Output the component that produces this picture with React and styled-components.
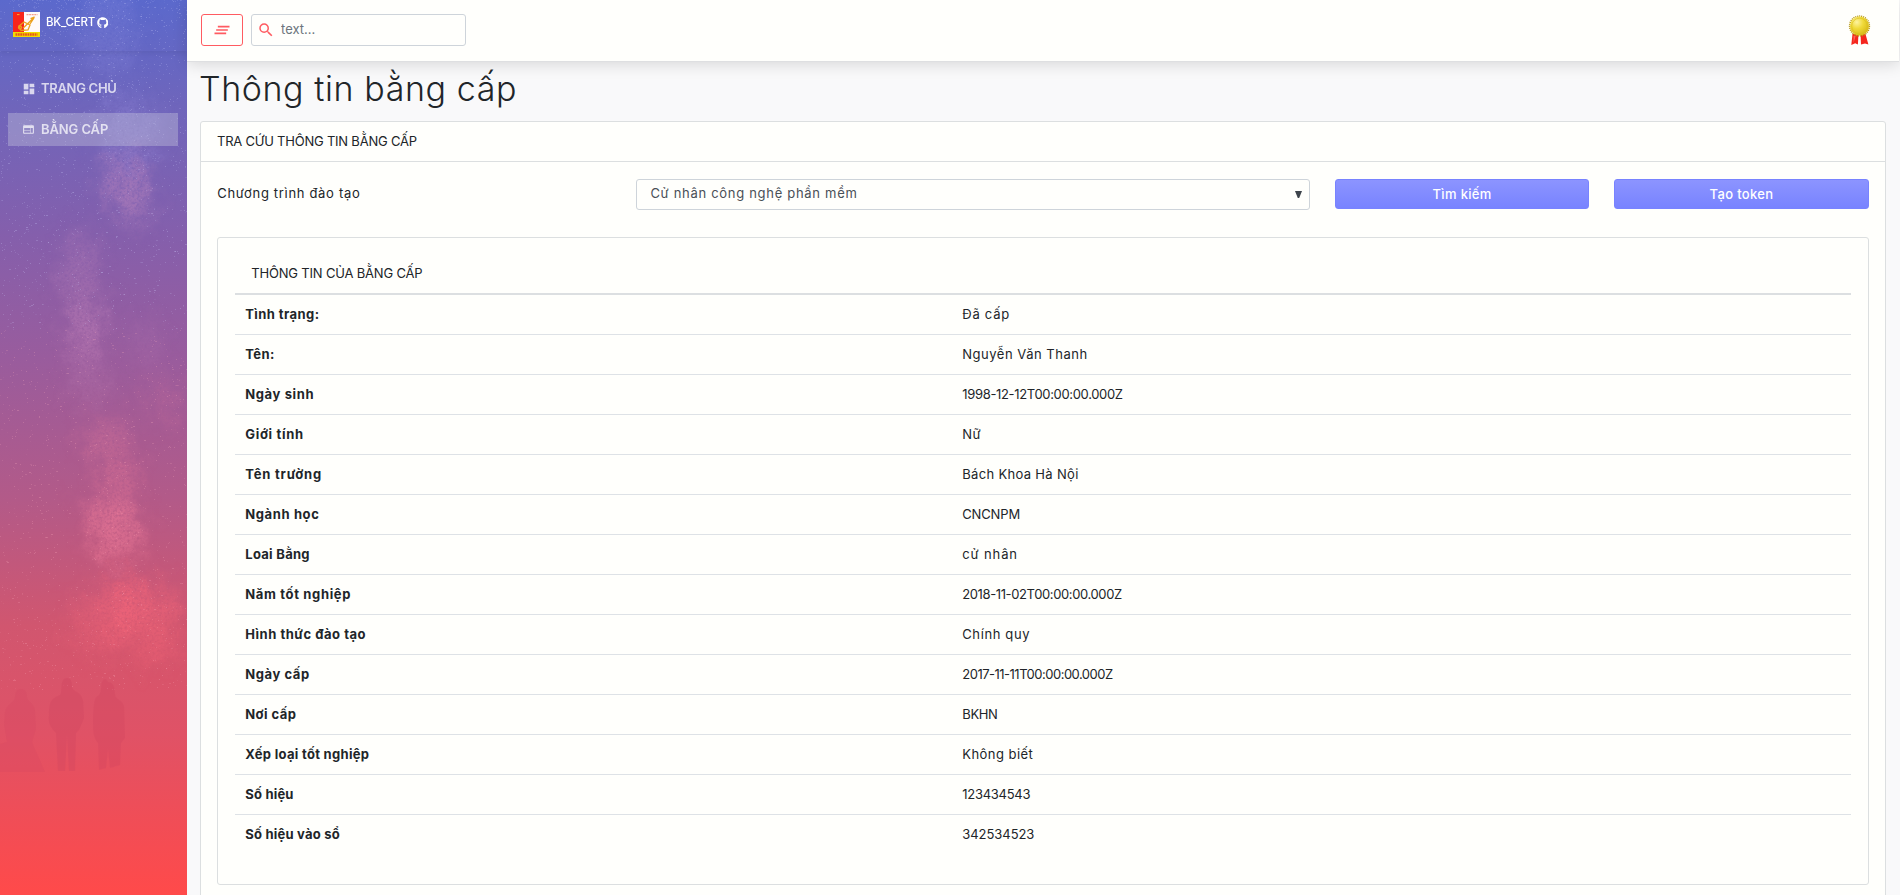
import React from "react";
import styled, { createGlobalStyle, css } from "styled-components";
import { MdClearAll, MdDashboard, MdSearch, MdWeb } from "react-icons/md";
import { FaGithub } from "react-icons/fa";

const GlobalStyle = createGlobalStyle`
  *, *::before, *::after { box-sizing: border-box; }
  html, body { height: 100%; overflow: hidden; }
  body {
    margin: 0;
    background: #f9f9fa;
    color: #212529;
    font: 370 13px/1.5 Inter, "Noto Sans", sans-serif;
  }
`;

const Text = styled.span`
  letter-spacing: ${({ $track = 0 }) => $track}px;
  white-space: nowrap;
`;

const Page = styled.div`
  display: flex;
  height: 895px;
  overflow: hidden;
`;

/* ---------- sidebar ---------- */

const Sidebar = styled.aside`
  position: relative;
  flex: none;
  width: 187px;
  color: #fff;
`;

const Scenery = styled.svg`
  position: absolute;
  inset: 0;
  width: 187px;
  height: 895px;
`;

const SidebarContent = styled.div`
  position: relative;
  display: flex;
  flex-direction: column;
`;

const Brand = styled.div`
  display: flex;
  align-items: flex-start;
  height: 51px;
  padding: 12px 0 0 13px;
  font-size: 11.5px;
  font-weight: 500;
  line-height: 21px;
  box-shadow: 0 2px 5px rgba(40, 40, 80, 0.12);

  .github {
    margin: 5px 0 0 2px;
  }
`;

const BrandLogo = styled.svg`
  flex: none;
  width: 27px;
  height: 25px;
  margin-right: 6px;
`;

const Nav = styled.nav`
  display: flex;
  flex-direction: column;
  gap: 8px;
  padding: 21px 9px 0 8px;
`;

const NavItem = styled.a`
  display: grid;
  grid-template-columns: 19px 1fr;
  align-items: center;
  height: 33px;
  padding-left: 14px;
  color: rgba(255, 255, 255, 0.74);
  font-weight: 580;
  ${({ $active }) => $active && css`
    background: rgba(200, 200, 220, 0.38);
  `}
`;

/* ---------- top bar ---------- */

const Main = styled.main`
  flex: 1;
  min-width: 0;
`;

const TopBar = styled.header`
  position: relative;
  display: flex;
  align-items: center;
  gap: 8px;
  height: 62px;
  margin-right: 1px;
  padding: 0 25px 2px 14px;
  background: #fffffc;
  border-bottom: 1px solid #dedfe1;
  box-shadow: 0 3px 14px rgba(0, 0, 0, 0.13);
`;

const MenuButton = styled.button`
  display: grid;
  place-items: center;
  width: 42px;
  height: 32px;
  padding: 1px 0 0;
  color: #ff5b61;
  background: #fffffc;
  border: 1px solid #ff5b61;
  border-radius: 3px;
`;

const SearchBox = styled.label`
  display: flex;
  align-items: center;
  width: 215px;
  height: 32px;
  padding-left: 5px;
  color: #ff5b61;
  background: #fffffc;
  border: 1px solid #ced4da;
  border-radius: 3px;
`;

const SearchInput = styled.input`
  flex: 1;
  min-width: 0;
  margin: 0 0 0 6px;
  padding: 0;
  border: 0;
  outline: 0;
  background: none;
  color: #495057;
  font: inherit;

  &::placeholder { color: #6c757d; opacity: 1; }
`;

const Medal = styled.svg`
  width: 30px;
  height: 32px;
  margin-left: auto;
`;

/* ---------- content ---------- */

const Content = styled.div`
  padding: 5px 14px 0 13px;
`;

const Title = styled.h1`
  height: 54px;
  margin: 0 0 0 -1px;
  font-size: 34px;
  font-weight: 310;
  line-height: 43px;
`;

const Panel = styled.section`
  border: 1px solid #dcdfe0;
  border-radius: 3px;
  background: #fffffc;
`;

const SearchPanel = styled(Panel)`
  height: 800px;
`;

const PanelHeader = styled.div`
  height: 40px;
  padding: 0 16px;
  line-height: 38px;
  border-bottom: 1px solid #dcdfe0;
`;

const PanelBody = styled.div`
  padding: 17px 16.25px 0;
`;

const FormRow = styled.div`
  display: grid;
  grid-template-columns: repeat(12, 1fr);
  column-gap: 25px;
  align-items: start;
  height: 58px;
`;

const FieldLabel = styled.label`
  grid-column: span 3;
  line-height: 29px;
`;

const SelectBox = styled.div`
  grid-column: span 5;
  display: grid;
  grid-template-columns: 1fr auto;
  align-items: center;
  height: 31px;
  padding: 0 7px 2px 13px;
  color: #495057;
  border: 1px solid #ced4da;
  border-radius: 3px;
`;

const ActionButton = styled.button`
  grid-column: span 2;
  height: 30px;
  padding: 0 0 1px;
  color: #fff;
  font: 500 13px/20px Inter, sans-serif;
  background: linear-gradient(#8c94ff, #7883ff);
  border: 1px solid #7883ff;
  border-radius: 3px;
`;

const DegreePanel = styled(Panel)`
  height: 648px;
  padding: 16px 17px 0;
`;

const DegreeHeader = styled.div`
  height: 41px;
  padding-left: 16px;
  line-height: 38px;
  border-bottom: 2px solid #dcdfe1;
`;

const DegreeRow = styled.div`
  display: grid;
  grid-template-columns: 717px 1fr;
  height: 40px;
  line-height: 38px;
  border-top: 1px solid #dee2e6;

  &:first-of-type { border-top-color: transparent; }
`;

const DegreeTerm = styled(Text)`
  padding-left: 10px;
  font-weight: 650;
`;

const DegreeValue = styled(Text)`
  padding-left: 10px;
`;

const DegreeTable = styled.div`
  margin-top: -1px;
`;

const DEGREE = [
  ["Tình trạng:", 0.42, "Đã cấp", 0.75],
  ["Tên:", 0.4, "Nguyễn Văn Thanh", 0.52],
  ["Ngày sinh", 0.62, "1998-12-12T00:00:00.000Z", -0.33],
  ["Giới tính", 0.7, "Nữ", 0.4],
  ["Tên trường", 0.8, "Bách Khoa Hà Nội", 0.32],
  ["Ngành học", 0.62, "CNCNPM", -0.15],
  ["Loai Bằng", 0.28, "cử nhân", 0.88],
  ["Năm tốt nghiệp", 0.65, "2018-11-02T00:00:00.000Z", -0.38],
  ["Hình thức đào tạo", 0.53, "Chính quy", 0.62],
  ["Ngày cấp", 0.57, "2017-11-11T00:00:00.000Z", -0.5],
  ["Nơi cấp", 0.45, "BKHN", -0.35],
  ["Xếp loại tốt nghiệp", 0.3, "Không biết", 0.45],
  ["Số hiệu", 0.2, "123434543", -0.27],
  ["Số hiệu vào sổ", 0.22, "342534523", -0.05],
];

/* Deterministic star field, thinning out towards the horizon. */
function makeStars(count) {
  let seed = 20181;
  const next = () => {
    seed = (seed * 16807) % 2147483647;
    return seed / 2147483647;
  };
  return Array.from({ length: count }, () => {
    const x = Math.floor(next() * 187);
    const y = Math.floor(Math.pow(next(), 1.35) * 690);
    return { x, y, size: next() > 0.88 ? 2 : 1, opacity: 0.06 + next() * 0.22 };
  });
}

const STARS = makeStars(2800);

const CLOUDS = [
  [108, 30, 28, 50, 0.08], [128, 130, 30, 34, 0.13], [126, 180, 24, 26, 0.18],
  [134, 205, 14, 24, 0.16], [80, 275, 18, 45, 0.13], [86, 335, 17, 32, 0.2],
  [145, 345, 14, 30, 0.06], [90, 385, 18, 22, 0.1], [105, 440, 22, 22, 0.14],
  [122, 475, 15, 18, 0.2], [108, 505, 24, 16, 0.18], [115, 535, 26, 30, 0.26],
  [165, 400, 14, 24, 0.08], [128, 605, 20, 30, 0.26], [105, 620, 34, 34, 0.14],
  [161, 620, 15, 38, 0.2], [147, 652, 8, 14, 0.2],
];

function SidebarScenery() {
  return (
    <Scenery viewBox="0 0 187 895" aria-hidden="true">
      <defs>
        <linearGradient id="dusk" x1="0" y1="0" x2="0" y2="1">
          <stop offset="0" stopColor="#5b69cc" />
          <stop offset="0.12" stopColor="#6f65bb" />
          <stop offset="0.26" stopColor="#845fac" />
          <stop offset="0.4" stopColor="#995c9d" />
          <stop offset="0.56" stopColor="#b35a88" />
          <stop offset="0.7" stopColor="#d1566f" />
          <stop offset="0.82" stopColor="#e05266" />
          <stop offset="0.92" stopColor="#f14d56" />
          <stop offset="1" stopColor="#ff4a4a" />
        </linearGradient>
        <filter id="nebula" filterUnits="userSpaceOnUse" x="-30" y="-30" width="247" height="790">
          <feGaussianBlur stdDeviation="10" result="soft" />
          <feTurbulence type="fractalNoise" baseFrequency="0.06" numOctaves="6" seed="9" result="noise" />
          <feDisplacementMap in="soft" in2="noise" scale="38" xChannelSelector="R" yChannelSelector="G" result="wisps" />
          <feTurbulence type="fractalNoise" baseFrequency="0.4" numOctaves="3" seed="2" />
          <feColorMatrix values="0 0 0 0 1  0 0 0 0 1  0 0 0 0 1  1.6 0 0 0 0.05" result="grain" />
          <feComposite in="wisps" in2="grain" operator="in" />
        </filter>
      </defs>
      <rect width="187" height="895" fill="url(#dusk)" />
      <g filter="url(#nebula)">
        {CLOUDS.map(([cx, cy, rx, ry, opacity]) => (
          <ellipse
            key={`${cx}-${cy}`} cx={cx} cy={cy} rx={rx} ry={ry} opacity={opacity * 1.9}
            fill={cy < 160 ? "#a39aea" : cy < 400 ? "#cf8fc0" : cy < 560 ? "#f47f9c" : "#ff6a7c"}
          />
        ))}
      </g>
      <g>
        {STARS.map(({ x, y, size, opacity }, i) => (
          <rect
            key={i} x={x} y={y} width={size} height="1" opacity={opacity}
            fill={y < 330 ? "#cfd0ff" : "#ffb0c0"}
          />
        ))}
      </g>
      <g fill="#cf4560" opacity="0.36">
        <path d="M21 689c4 0 6 3 6 8 0 5 7 5 8 14l1 18-4 13c4 10 8 18 13 30H0V744l7-2-3-18 1-12c1-8 10-9 10-15 0-5 2-8 6-8z" opacity=".55" />
        <path d="M67 678c4 0 5 4 5 8 0 7 9 4 11 15l1 17-5 12-3 3-1 38h-6l-2-37-2 37h-7l-2-38c-6-6-8-11-7-18 0-14 3-17 11-20 3-2-1-17 7-17z" opacity=".9" />
        <path d="M108 682c5 0 7 5 7 12 0 6 7 5 9 12l1 32-4 5-1 22-10 3-2-19-2 19-7 2-1-27c-5-5-5-12-5-24 1-22 2-21 6-24 4-4 0-16 7-16z" opacity=".8" />
      </g>
    </Scenery>
  );
}

function UniversityLogo() {
  return (
    <BrandLogo viewBox="0 0 27 25" aria-hidden="true">
      <path fill="#f8251b" d="M0 0h11v20H0z" />
      <path fill="#fffafa" d="M11 0h16v20H11z" />
      <path fill="#f0dc00" d="M0 20h27v5H0z" />
      <path d="M2.5 22.5h22" stroke="#e9551a" strokeWidth="2.6" strokeDasharray="1.8 .6" />
      <path d="M13.5 2.6h11" stroke="#f7a08f" strokeWidth="1.2" strokeDasharray="2 .6" />
      <path d="M4 2.6h2.5" stroke="#ffb02e" />
      <g fill="none" stroke="#eca01c" strokeWidth="1.3">
        <path d="M21.5 5 10 16.2M21.5 5l-4 1.5M21 6l-4 6M6 14l5-4 6 3-2 5-7 .5z" />
        <circle cx="7" cy="15.5" r="1.5" />
      </g>
    </BrandLogo>
  );
}

function MedalIcon() {
  return (
    <Medal viewBox="0 0 30 32" aria-hidden="true">
      <defs>
        <radialGradient id="gold" cx="0.36" cy="0.3" r="0.75">
          <stop offset="0" stopColor="#fdf3a0" />
          <stop offset="0.45" stopColor="#f0da3a" />
          <stop offset="1" stopColor="#d6b714" />
        </radialGradient>
      </defs>
      <path d="M8.5 20h6l-.6 10.500-2.700-1.200-3.900 1.700z" fill="#f5261d" />
      <path d="M16.500 20h5l2.900 10.500-3.400-1-4 1z" fill="#f5261d" />
      <path d="M9.500 22l2.200-.2L9.600 29zM19.500 22l1.900 7" fill="#ff8d86" opacity=".6" />
      <circle cx="15.500" cy="12" r="9.900" fill="none" stroke="#b99a16" strokeWidth="1.500" strokeDasharray="1.100 .9" />
      <circle cx="15.500" cy="12" r="9.500" fill="url(#gold)" />
      <circle cx="15.500" cy="12" r="7.800" fill="none" stroke="#d9bd22" strokeWidth=".6" />
    </Medal>
  );
}

export default function App() {
  return (
    <>
      <GlobalStyle />
      <Page>
        <Sidebar>
          <SidebarScenery />
          <SidebarContent>
            <Brand>
              <UniversityLogo />
              <Text $track={-0.25}>BK_CERT</Text>
              <FaGithub className="github" size={11.5} />
            </Brand>
            <Nav>
              <NavItem>
                <MdDashboard size={14} />
                <Text $track={-0.3}>TRANG CHỦ</Text>
              </NavItem>
              <NavItem $active>
                <MdWeb size={13} />
                <Text $track={-0.1}>BẰNG CẤP</Text>
              </NavItem>
            </Nav>
          </SidebarContent>
        </Sidebar>

        <Main>
          <TopBar>
            <MenuButton aria-label="Menu"><MdClearAll size={20} /></MenuButton>
            <SearchBox>
              <MdSearch size={18} />
              <SearchInput placeholder="text..." />
            </SearchBox>
            <MedalIcon />
          </TopBar>

          <Content>
            <Title><Text $track={0.58}>Thông tin bằng cấp</Text></Title>
            <SearchPanel>
              <PanelHeader><Text $track={-0.22}>TRA CỨU THÔNG TIN BẰNG CẤP</Text></PanelHeader>
              <PanelBody>
                <FormRow>
                  <FieldLabel><Text $track={0.68}>Chương trình đào tạo</Text></FieldLabel>
                  <SelectBox role="combobox">
                    <Text $track={0.7}>Cử nhân công nghệ phần mềm</Text>
                    <svg width="7" height="8" viewBox="0 0 7 8"><path d="M0 1h7L4.200 8H2.800z" fill="#3d444b" /></svg>
                  </SelectBox>
                  <ActionButton><Text $track={0.35}>Tìm kiếm</Text></ActionButton>
                  <ActionButton><Text $track={0.35}>Tạo token</Text></ActionButton>
                </FormRow>
                <DegreePanel>
                  <DegreeHeader><Text $track={-0.18}>THÔNG TIN CỦA BẰNG CẤP</Text></DegreeHeader>
                  <DegreeTable>
                    {DEGREE.map(([term, termTrack, value, valueTrack]) => (
                      <DegreeRow key={term}>
                        <DegreeTerm $track={termTrack}>{term}</DegreeTerm>
                        <DegreeValue $track={valueTrack}>{value}</DegreeValue>
                      </DegreeRow>
                    ))}
                  </DegreeTable>
                </DegreePanel>
              </PanelBody>
            </SearchPanel>
          </Content>
        </Main>
      </Page>
    </>
  );
}
